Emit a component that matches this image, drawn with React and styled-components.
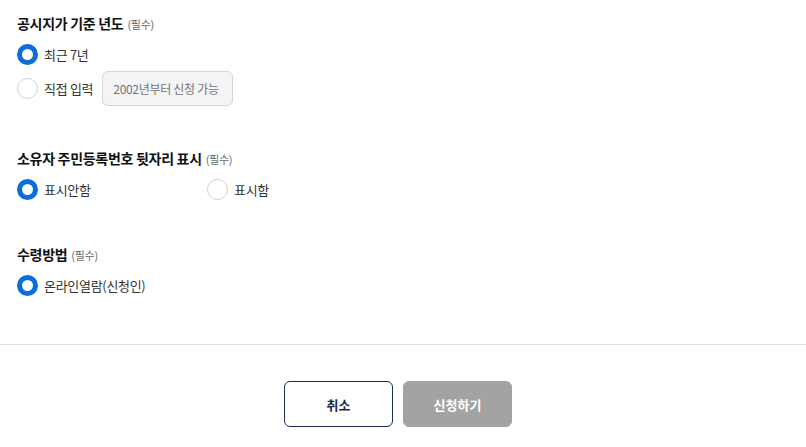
import React, { useState } from 'react';
import styled, { createGlobalStyle } from 'styled-components';

const GlobalStyle = createGlobalStyle`
  body {
    margin: 0;
    background: #fff;
    font-family: "Noto Sans CJK KR", "Noto Sans", sans-serif;
    color: #222;
  }
`;

const Page = styled.div`
  width: 806px;
`;

const Form = styled.div`
  padding: 12px 17px 0;
`;

const Section = styled.section`
  margin-top: ${({ gap }) => gap || 0}px;
`;

const Title = styled.h3`
  margin: 0 0 8px;
  font-size: 14px;
  line-height: 22px;
  font-weight: 700;
  color: #111;
  letter-spacing: -0.3px;
`;

const Required = styled.span`
  margin-left: 4px;
  font-size: 11px;
  font-weight: 400;
  color: #666;
`;

const Options = styled.div`
  display: flex;
  flex-direction: ${({ inline }) => (inline ? 'row' : 'column')};
  gap: 6px;
`;

const Option = styled.label`
  display: flex;
  align-items: center;
  gap: 6px;
  min-height: 22px;
  width: ${({ width }) => (width ? `${width}px` : 'auto')};
  font-size: 13px;
  color: #333;
  letter-spacing: -0.3px;
  cursor: pointer;
`;

const Dot = styled.span`
  box-sizing: border-box;
  width: 21px;
  height: 21px;
  flex: none;
  border-radius: 50%;
  background: #fff;
  border: ${({ checked }) => (checked ? '5px solid #0a6fd8' : '1px solid #cfcfcf')};
`;

const YearInput = styled.input`
  box-sizing: border-box;
  width: 131px;
  height: 35px;
  margin-left: 3px;
  padding: 0 10px;
  border: 1px solid #d3d6da;
  border-radius: 6px;
  background: #f3f4f6;
  font-family: inherit;
  font-size: 12px;
  color: #555;
  letter-spacing: -0.3px;
  outline: none;

  ::placeholder {
    color: #666;
  }
`;

const Divider = styled.hr`
  margin: 48px 0 0;
  border: 0;
  border-top: 1px solid #dde2e7;
`;

const Actions = styled.div`
  display: flex;
  justify-content: center;
  gap: 10px;
  padding: 36px 10px 0 0;
`;

const Button = styled.button`
  box-sizing: border-box;
  width: 109px;
  height: 46px;
  border-radius: 6px;
  font-family: inherit;
  font-size: 13px;
  font-weight: 700;
  cursor: pointer;
  border: 1px solid ${({ primary }) => (primary ? '#a3a3a3' : '#1c2f52')};
  background: ${({ primary }) => (primary ? '#a3a3a3' : '#fff')};
  color: ${({ primary }) => (primary ? '#fff' : '#1a2a48')};
`;

function Radio({ checked, onSelect, children, width }) {
  return (
    <Option width={width} onClick={onSelect}>
      <Dot checked={checked} />
      {children}
    </Option>
  );
}

export default function App() {
  const [year, setYear] = useState('recent');
  const [show, setShow] = useState('hide');
  const [receive, setReceive] = useState('online');

  return (
    <Page>
      <GlobalStyle />
      <Form>
        <Section>
          <Title>
            공시지가 기준 년도<Required>(필수)</Required>
          </Title>
          <Options>
            <Radio checked={year === 'recent'} onSelect={() => setYear('recent')}>
              최근 7년
            </Radio>
            <Option>
              <Dot checked={year === 'direct'} onClick={() => setYear('direct')} />
              직접 입력
              <YearInput placeholder="2002년부터 신청 가능" />
            </Option>
          </Options>
        </Section>

        <Section gap={41}>
          <Title>
            소유자 주민등록번호 뒷자리 표시<Required>(필수)</Required>
          </Title>
          <Options inline>
            <Radio width={184} checked={show === 'hide'} onSelect={() => setShow('hide')}>
              표시안함
            </Radio>
            <Radio checked={show === 'show'} onSelect={() => setShow('show')}>
              표시함
            </Radio>
          </Options>
        </Section>

        <Section gap={43}>
          <Title>
            수령방법<Required>(필수)</Required>
          </Title>
          <Options>
            <Radio checked={receive === 'online'} onSelect={() => setReceive('online')}>
              온라인열람(신청인)
            </Radio>
          </Options>
        </Section>
      </Form>

      <Divider />

      <Actions>
        <Button>취소</Button>
        <Button primary>신청하기</Button>
      </Actions>
    </Page>
  );
}
